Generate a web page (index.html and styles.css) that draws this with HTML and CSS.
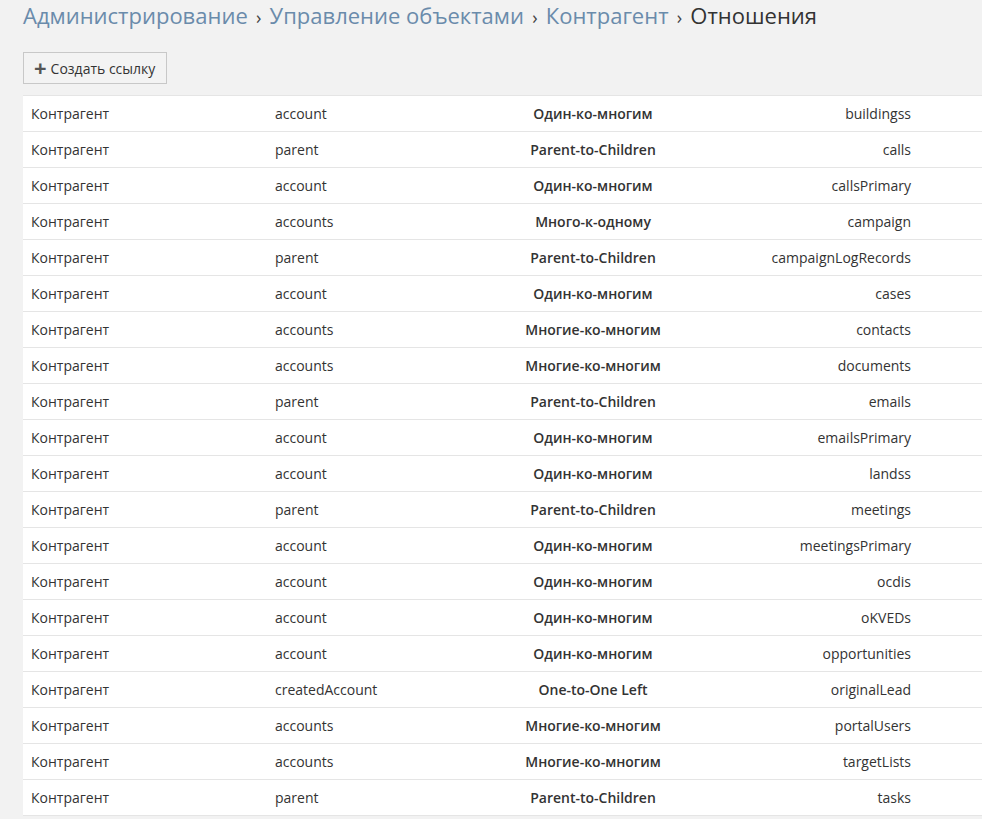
FILE: index.html
```html
<!DOCTYPE html>
<html lang="ru">
<head>
  <meta charset="UTF-8">
  <title>Отношения</title>
  <link rel="stylesheet" href="styles.css">
</head>
<body>
  <div class="page">
    <h3 class="page-header">
      <a href="#">Администрирование</a>
      <span class="sep">›</span>
      <a href="#">Управление объектами</a>
      <span class="sep">›</span>
      <a href="#">Контрагент</a>
      <span class="sep">›</span>
      <span class="current">Отношения</span>
    </h3>

    <div class="actions">
      <button class="btn"><span class="plus">+</span>Создать ссылку</button>
    </div>

    <div class="list">
      <table>
        <colgroup>
          <col class="c-entity">
          <col class="c-link">
          <col class="c-type">
          <col class="c-foreign">
          <col class="c-ctrl">
        </colgroup>
        <tbody>
          <tr><td>Контрагент</td><td>account</td><td class="type">Один-ко-многим</td><td class="foreign">buildingss</td><td></td></tr>
          <tr><td>Контрагент</td><td>parent</td><td class="type">Parent-to-Children</td><td class="foreign">calls</td><td></td></tr>
          <tr><td>Контрагент</td><td>account</td><td class="type">Один-ко-многим</td><td class="foreign">callsPrimary</td><td></td></tr>
          <tr><td>Контрагент</td><td>accounts</td><td class="type">Много-к-одному</td><td class="foreign">campaign</td><td></td></tr>
          <tr><td>Контрагент</td><td>parent</td><td class="type">Parent-to-Children</td><td class="foreign">campaignLogRecords</td><td></td></tr>
          <tr><td>Контрагент</td><td>account</td><td class="type">Один-ко-многим</td><td class="foreign">cases</td><td></td></tr>
          <tr><td>Контрагент</td><td>accounts</td><td class="type">Многие-ко-многим</td><td class="foreign">contacts</td><td></td></tr>
          <tr><td>Контрагент</td><td>accounts</td><td class="type">Многие-ко-многим</td><td class="foreign">documents</td><td></td></tr>
          <tr><td>Контрагент</td><td>parent</td><td class="type">Parent-to-Children</td><td class="foreign">emails</td><td></td></tr>
          <tr><td>Контрагент</td><td>account</td><td class="type">Один-ко-многим</td><td class="foreign">emailsPrimary</td><td></td></tr>
          <tr><td>Контрагент</td><td>account</td><td class="type">Один-ко-многим</td><td class="foreign">landss</td><td></td></tr>
          <tr><td>Контрагент</td><td>parent</td><td class="type">Parent-to-Children</td><td class="foreign">meetings</td><td></td></tr>
          <tr><td>Контрагент</td><td>account</td><td class="type">Один-ко-многим</td><td class="foreign">meetingsPrimary</td><td></td></tr>
          <tr><td>Контрагент</td><td>account</td><td class="type">Один-ко-многим</td><td class="foreign">ocdis</td><td></td></tr>
          <tr><td>Контрагент</td><td>account</td><td class="type">Один-ко-многим</td><td class="foreign">oKVEDs</td><td></td></tr>
          <tr><td>Контрагент</td><td>account</td><td class="type">Один-ко-многим</td><td class="foreign">opportunities</td><td></td></tr>
          <tr><td>Контрагент</td><td>createdAccount</td><td class="type">One-to-One Left</td><td class="foreign">originalLead</td><td></td></tr>
          <tr><td>Контрагент</td><td>accounts</td><td class="type">Многие-ко-многим</td><td class="foreign">portalUsers</td><td></td></tr>
          <tr><td>Контрагент</td><td>accounts</td><td class="type">Многие-ко-многим</td><td class="foreign">targetLists</td><td></td></tr>
          <tr><td>Контрагент</td><td>parent</td><td class="type">Parent-to-Children</td><td class="foreign">tasks</td><td></td></tr>
        </tbody>
      </table>
    </div>
  </div>
</body>
</html>
```

FILE: styles.css
```css
html, body {
  margin: 0;
  overflow: hidden;
}
body {
  font-family: "Open Sans", "Liberation Sans", sans-serif;
  font-size: 14px;
  color: #333;
  background-color: #f2f2f2;
}
.page {
  padding: 0 0 0 23px;
}
.page-header {
  margin: 0;
  padding-top: 1px;
  font-size: 22px;
  font-weight: normal;
  line-height: 28px;
  white-space: nowrap;
}
.page-header a {
  color: #6a8bab;
  text-decoration: none;
}
.page-header .sep {
  color: #444;
  font-size: 18px;
  margin: 0 2.5px;
}
.page-header .current {
  color: #333;
}
.actions {
  display: flex;
  margin-top: 21px;
  margin-bottom: 11px;
}
.btn {
  display: inline-flex;
  align-items: center;
  box-sizing: border-box;
  height: 32px;
  padding: 0 11px 0 10px;
  font-family: inherit;
  font-size: 14px;
  color: #333;
  background: #f3f3f3;
  border: 1px solid #c8c8c8;
  border-radius: 0;
}
.btn .plus {
  font-size: 22px;
  font-weight: bold;
  color: #555;
  line-height: 1;
  margin-right: 4px;
  margin-top: -2px;
}
.list {
  width: 1000px;
}
table {
  width: 100%;
  border-collapse: collapse;
  table-layout: fixed;
  background: #fff;
  border-top: 1px solid #e5e5e5;
}
.c-entity { width: 244px; }
.c-link { width: 244px; }
.c-type { width: 164px; }
.c-foreign { width: 244px; }
td {
  height: 35px;
  padding: 0 8px;
  border-bottom: 1px solid #e5e5e5;
  white-space: nowrap;
  vertical-align: middle;
}
td.type {
  text-align: center;
  font-weight: 600;
}
td.foreign {
  text-align: right;
}
```
